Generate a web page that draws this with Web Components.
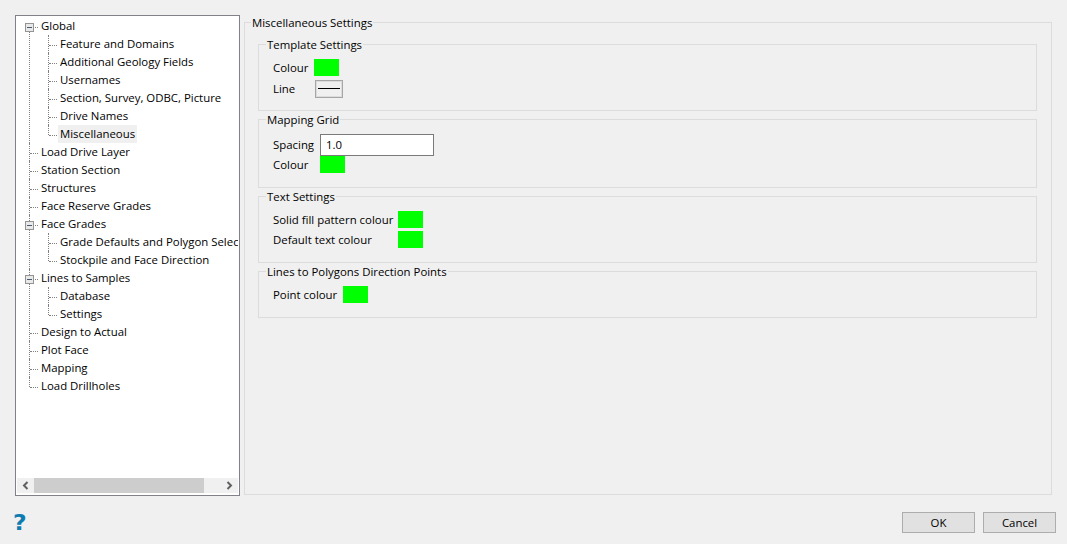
<!DOCTYPE html>
<html lang="en"><head><meta charset="utf-8"><title>Settings</title>
<style>
html,body{margin:0;padding:0;height:100%;background:#f0f0f0}
body{font:11.4px/16px "Open Sans","Noto Sans",sans-serif;color:#000;overflow:hidden}
</style></head><body>
<settings-dialog>
  <tree-panel slot="nav">
    <tree-node label="Global" open first>
      <tree-node label="Feature and Domains"></tree-node>
      <tree-node label="Additional Geology Fields"></tree-node>
      <tree-node label="Usernames"></tree-node>
      <tree-node label="Section, Survey, ODBC, Picture"></tree-node>
      <tree-node label="Drive Names"></tree-node>
      <tree-node label="Miscellaneous" selected last></tree-node>
    </tree-node>
    <tree-node label="Load Drive Layer"></tree-node>
    <tree-node label="Station Section"></tree-node>
    <tree-node label="Structures"></tree-node>
    <tree-node label="Face Reserve Grades"></tree-node>
    <tree-node label="Face Grades" open>
      <tree-node label="Grade Defaults and Polygon Selection"></tree-node>
      <tree-node label="Stockpile and Face Direction" last></tree-node>
    </tree-node>
    <tree-node label="Lines to Samples" open>
      <tree-node label="Database"></tree-node>
      <tree-node label="Settings" last></tree-node>
    </tree-node>
    <tree-node label="Design to Actual"></tree-node>
    <tree-node label="Plot Face"></tree-node>
    <tree-node label="Mapping"></tree-node>
    <tree-node label="Load Drillholes" last></tree-node>
  </tree-panel>
  <group-box slot="main" label="Miscellaneous Settings" outer>
    <group-box label="Template Settings" h="51">
      <form-row label="Colour" w="41"><colour-swatch></colour-swatch></form-row>
      <form-row label="Line" w="42" mt="4" up><line-button></line-button></form-row>
    </group-box>
    <group-box label="Mapping Grid" h="53">
      <form-row label="Spacing" w="47" up><text-box value="1.0"></text-box></form-row>
      <form-row label="Colour" w="47"><colour-swatch></colour-swatch></form-row>
    </group-box>
    <group-box label="Text Settings" h="51">
      <form-row label="Solid fill pattern colour" w="125"><colour-swatch></colour-swatch></form-row>
      <form-row label="Default text colour" w="125" mt="3"><colour-swatch></colour-swatch></form-row>
    </group-box>
    <group-box label="Lines to Polygons Direction Points" h="31">
      <form-row label="Point colour" w="70"><colour-swatch></colour-swatch></form-row>
    </group-box>
  </group-box>
  <help-mark slot="help"></help-mark>
  <push-button slot="actions">OK</push-button>
  <push-button slot="actions">Cancel</push-button>
</settings-dialog>
<script>
function def(name, css, html, init){
  customElements.define(name, class extends HTMLElement{
    constructor(){super();this.attachShadow({mode:'open'});}
    connectedCallback(){
      if(this._r)return;this._r=1;
      this.shadowRoot.innerHTML='<style>'+css+'</style>'+(typeof html==='function'?html(this):html);
      if(init)init(this);
    }
  });
}
const esc=s=>String(s||'').replace(/&/g,'&amp;').replace(/</g,'&lt;');

def('settings-dialog',`
:host{display:grid;grid-template-columns:225px 808px;column-gap:4px;grid-template-rows:481px 1fr;padding:15px 0 0 15px;height:544px;box-sizing:border-box;width:1067px}
.help{display:flex;margin:18px 0 0 -2px}
.actions{display:flex;justify-content:flex-end;gap:8px;margin:16px -4px 0 0;align-items:flex-start}
.m{display:block;min-width:0}
`,`<div class="m"><slot name="nav"></slot></div><div class="m"><slot name="main"></slot></div>
<div class="help"><slot name="help"></slot></div><div class="actions"><slot name="actions"></slot></div>`);

def('tree-panel',`
:host{display:flex;flex-direction:column;height:481px;box-sizing:border-box;border:1px solid #82818a;background:#fff;padding:1px}
.list{flex:1;overflow:hidden;min-height:0}
.inner{width:400px}
.bar{flex:none;height:15px;margin-bottom:1px;background:#f0f0f0;display:flex;align-items:stretch}
.btn{flex:none;width:17px;display:flex;align-items:center;justify-content:center}
.track{flex:1;display:flex}
.thumb{width:170px;background:#cdcdcd}
svg{display:block}
`,`<div class="list"><div class="inner"><slot></slot></div></div>
<div class="bar"><div class="btn"><svg width="7" height="9" viewBox="0 0 7 9"><path d="M5.5 1 2 4.5 5.5 8" fill="none" stroke="#606060" stroke-width="2"/></svg></div>
<div class="track"><div class="thumb"></div></div>
<div class="btn"><svg width="7" height="9" viewBox="0 0 7 9"><path d="M1.5 1 5 4.5 1.5 8" fill="none" stroke="#606060" stroke-width="2"/></svg></div></div>`);

def('tree-node',`
:host{display:block;position:relative}
.stem{position:absolute;left:12px;top:0;bottom:0;border-left:1px dotted #808080}
:host([first]) .stem{top:10px}
:host([last]) .stem{bottom:auto;height:10px}
.row{position:relative;height:18px;display:flex;align-items:center;padding-left:22px;white-space:nowrap}
.row::before{content:"";position:absolute;left:13px;width:8px;top:10px;border-top:1px dotted #808080}
.lab{padding:0 2px;height:18px;line-height:18px}
:host([selected]) .lab{background:#f0f0f0}
.box{position:absolute;left:8px;top:6px;width:9px;height:9px;z-index:1}
.kids{padding-left:19px;position:relative}
`,n=>`<div class="stem"></div><div class="row">${n.hasAttribute('open')?`<svg class="box" viewBox="0 0 9 9"><rect x=".5" y=".5" width="8" height="8" fill="#e9e9e9" stroke="#949494"/><path d="M2 4.5h5" stroke="#4a5a70"/></svg>`:''}<span class="lab">${esc(n.getAttribute('label'))}</span></div><div class="kids"><slot></slot></div>`);

def('group-box',`
:host{display:block}
fieldset{margin:0;padding:8px 14px 0 14px;border:1px solid #dcdcdc;box-sizing:border-box;min-width:0}
legend{padding:0 1px;margin-left:-7px;line-height:16px;height:14px}
:host([outer]) fieldset{height:480px;padding:8px 14px 0 13px}
::slotted(group-box){margin-bottom:1px}
`,n=>`<fieldset><legend>${esc(n.getAttribute('label'))}</legend><div class="c" style="${n.hasAttribute('h')?'height:'+n.getAttribute('h')+'px':''}"><slot></slot></div></fieldset>`);

def('form-row',`
:host{display:flex;align-items:center}
span{flex:none;white-space:nowrap;line-height:17px}
:host([up]) span{line-height:15px;margin-bottom:2px}
`,n=>`<span style="width:${n.getAttribute('w')}px">${esc(n.getAttribute('label'))}</span><slot></slot>`,
n=>{n.style.marginTop=(n.getAttribute('mt')||0)+'px';});

def('colour-swatch',`:host{display:block;width:25px;height:17px;background:#00ff00}`,'');

def('line-button',`
:host{display:flex;align-items:center;justify-content:center;width:28px;height:18px;box-sizing:border-box;border:1px solid #a6a6a6;background:#f0f0f0;box-shadow:inset 0 0 0 1px #dcdcdc}
i{display:block;width:22px;height:1px;background:#000;margin-bottom:1px}
`,'<i></i>');

def('text-box',`
:host{display:block;width:114px;height:22px;box-sizing:border-box;border:1px solid #7a7a7a;background:#fff;padding:0 5px;line-height:20px}
`,n=>esc(n.getAttribute('value')));

def('help-mark',`
:host{display:block;width:16px;height:18px;font:bold 21px/18px "DejaVu Sans",sans-serif;color:#0f7cb0;transform:scaleX(1.12);transform-origin:0 50%}
`,'?');

def('push-button',`
:host{display:flex;align-items:center;justify-content:center;width:73px;height:21px;box-sizing:border-box;border:1px solid #adadad;background:#e1e1e1}
`,'<slot></slot>');
</script>
</body></html>
